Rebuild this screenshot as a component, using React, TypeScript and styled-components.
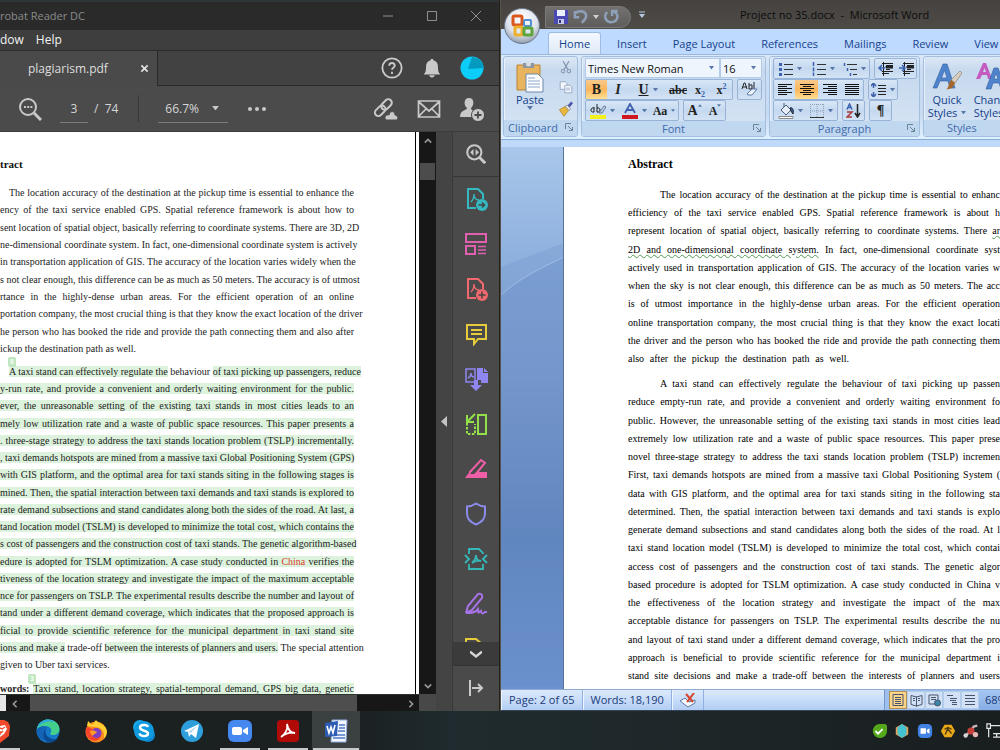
import React from "react";
import styled, { createGlobalStyle, css } from "styled-components";

const ui = `"Open Sans", "Noto Sans", sans-serif`;
const serif = `"Liberation Serif", serif`;

const GlobalStyle = createGlobalStyle`
  * { box-sizing: border-box; }
  body { margin: 0; font-family: ${ui}; overflow: hidden; background: #1b2021; }
  button, input, select { font: inherit; color: inherit; margin: 0; padding: 0; border: 0; background: none; border-radius: 0; outline: 0; }
  select { appearance: none; }
  svg { display: block; flex: none; }
  h1, p { margin: 0; }
`;

/* ---------- shell ---------- */

const Desktop = styled.div`
  height: 100vh;
  display: flex;
  flex-direction: column;
`;
const Windows = styled.main`
  flex: 1;
  min-height: 0;
  display: grid;
  grid-template-columns: minmax(0, 1fr) minmax(0, 1fr);
`;

/* ---------- reader window ---------- */

const Reader = styled.section`
  display: flex;
  flex-direction: column;
  min-height: 0;
  background: #4a4a4a;
  color: #d6d6d6;
  border-right: 1px solid #24211c;
`;
const ReaderTitle = styled.header`
  height: 30px;
  display: flex;
  align-items: center;
  background: #2a2a2a;
  border-top: 2px solid #2e3638;
  color: #8b8b8b;
  font-size: 11px;
  line-height: 16px;
`;
const WindowButtons = styled.div`
  margin-left: auto;
  display: flex;
  padding-right: 1px;
`;
const WindowButton = styled.button`
  width: 44px;
  height: 26px;
  display: grid;
  place-items: center;
  color: #8f8f8f;
`;
const MenuBar = styled.nav`
  height: 20px;
  display: flex;
  gap: 12px;
  background: #3e3e3e;
  color: #f2f2f2;
  font-size: 12px;
  line-height: 20px;
`;
const TabStrip = styled.div`
  height: 36px;
  display: flex;
  background: #424242;
  border-top: 1px solid #2c2c2c;
`;
const FileTab = styled.div`
  width: 158px;
  padding: 0 8px 0 28px;
  display: flex;
  align-items: center;
  justify-content: space-between;
  background: #4a4a4a;
  border-right: 1px solid #2a2a2a;
  font-size: 12px;
  color: #dedede;
`;
const CloseTab = styled.button`
  width: 10px;
  height: 10px;
  display: grid;
  place-items: center;
`;
const TabActions = styled.div`
  flex: 1;
  display: flex;
  align-items: center;
  justify-content: flex-end;
  gap: 16px;
  padding-right: 15px;
  border-bottom: 1px solid #2a2a2a;
`;
const IconButton = styled.button`
  width: 24px;
  height: 24px;
  display: grid;
  place-items: center;
  color: #c9c9c9;
`;
const Toolbar = styled.div`
  height: 46px;
  display: flex;
  align-items: center;
  background: #4b4b4b;
  padding: 0 15px 0 18px;
  font-size: 12px;
  border-bottom: 1px solid #3c3c3c;
`;
const PageInput = styled.input`
  width: 28px;
  height: 28px;
  margin: 0 6px 0 18px;
  text-align: center;
  border-bottom: 1px solid #7b7b7b;
`;
const Rule = styled.span`
  width: 1px;
  height: 27px;
  margin: 0 19px 0 20px;
  background: #383838;
`;
const ZoomBox = styled.label`
  width: 70px;
  height: 28px;
  margin-right: 17px;
  display: flex;
  align-items: center;
  padding: 0 9px 0 7px;
  border-bottom: 1px solid #7b7b7b;
  select { flex: 1; min-width: 0; }
`;
const ToolbarEnd = styled.div`
  margin-left: auto;
  display: flex;
  gap: 19px;
`;
const ReaderBody = styled.div`
  flex: 1;
  min-height: 0;
  display: flex;
`;
const Viewer = styled.div`
  flex: 1;
  min-width: 0;
  display: flex;
  flex-direction: column;
  background: #484848;
`;
const ViewRow = styled.div`
  flex: 1;
  min-height: 0;
  display: flex;
`;
const PdfPage = styled.article`
  flex: 1;
  min-width: 0;
  overflow: hidden;
  background: #fff;
  color: #222;
  font-family: ${serif};
  font-size: 10px;
  line-height: 17px;
  padding: 24px 61px 0 0;
  border-right: 1px solid #000;
`;
const Gutter = styled.div`
  width: 3px;
  background: #fff;
`;
const PdfHeading = styled.h1`
  font-size: 11px;
  line-height: 17px;
  font-weight: 700;
  color: #111;
`;
const Para = styled.div<{ $h: number; $top: number }>`
  position: relative;
  display: flex;
  flex-direction: column;
  justify-content: space-between;
  height: ${(p) => p.$h}px;
  margin-top: ${(p) => p.$top}px;
`;
const Line = styled.p<{ $indent?: number; $w?: number }>`
  width: ${(p) => (p.$w ? p.$w + "px" : "auto")};
  white-space: nowrap;
  text-align: justify;
  text-align-last: justify;
  padding-left: ${(p) => p.$indent ?? 0}px;
`;
const Hl = styled.mark`
  background: #dcf2dc;
  color: inherit;
`;
const Red = styled.span`
  color: #d8402c;
`;
const NoteFlag = styled.span<{ $x: number }>`
  position: absolute;
  left: ${(p) => p.$x}px;
  top: -6px;
  width: 8px;
  height: 10px;
  border-radius: 2px;
  background: #c0e6c0;
  color: #f2fff2;
  font: 700 7px/10px ${ui};
  text-align: center;
`;
const VScroll = styled.div`
  width: 17px;
  display: flex;
  flex-direction: column;
  align-items: center;
  background: #171717;
  color: #9a9a9a;
`;
const ScrollButton = styled.button`
  width: 17px;
  height: 17px;
  display: grid;
  place-items: center;
`;
const VThumb = styled.div`
  width: 15px;
  height: 17px;
  margin: 14px 0 auto;
  background: #4c4c4c;
`;
const HScroll = styled.div`
  height: 17px;
  display: flex;
  background: #171717;
  color: #9a9a9a;
  margin-right: 17px;
  border-top: 1px solid #2d352d;
`;
const HCorner = styled.div`
  width: 6px;
  background: #e6e6e6;
`;
const HThumb = styled.div`
  flex: 1;
  margin: 0 45px 0 7px;
  background: #4e4e4e;
`;
const Collapse = styled.button`
  width: 17px;
  display: grid;
  place-items: center;
  background: #444;
  border-right: 1px solid #393939;
`;
const ToolRail = styled.aside`
  width: 46px;
  display: flex;
  flex-direction: column;
  background: #4a4a4a;
`;
const ToolList = styled.div`
  flex: 1;
  min-height: 0;
  overflow: hidden;
`;
const Tool = styled.button<{ $c?: string; $line?: boolean }>`
  width: 46px;
  height: 45px;
  display: grid;
  place-items: center;
  color: ${(p) => p.$c ?? "#c9c9c9"};
  border-bottom: 1px solid ${(p) => (p.$line ? "#363636" : "transparent")};
`;
const MoreTools = styled.button`
  height: 24px;
  display: grid;
  place-items: center;
  background: #3b3b3b;
  border-bottom: 1px solid #333;
`;

/* ---------- word window ---------- */

const Word = styled.section`
  display: flex;
  flex-direction: column;
  min-height: 0;
  overflow: hidden;
  background: #bfd9fb;
  color: #15428b;
  border-left: 1px solid #56524c;
  font-size: 11px;
  position: relative;
`;
const WordTitle = styled.header`
  height: 29px;
  display: flex;
  align-items: center;
  padding-left: 44px;
  background: linear-gradient(#45423f, #4e4b47);
  color: #0c0c0c;
  white-space: pre;
`;
const QuickAccess = styled.div`
  width: 86px;
  height: 22px;
  margin-top: 4px;
  padding-left: 8px;
  display: flex;
  align-items: center;
  gap: 5px;
  border: 1px solid #7b7977;
  border-radius: 0 11px 11px 0;
  background: linear-gradient(#72716f, #5f5d5b);
`;
const PlainButton = styled.button`
  display: grid;
  place-items: center;
`;
const DocTitle = styled.span`
  margin-left: 89px;
`;
const Orb = styled.button`
  position: absolute;
  left: 2px;
  top: 7px;
  width: 38px;
  height: 38px;
`;
const RibbonTabs = styled.nav`
  height: 25px;
  display: flex;
  align-items: flex-end;
  padding-left: 47px;
  background: #bfdaff;
`;
const RibbonTab = styled.button<{ $on?: boolean }>`
  height: 22px;
  flex: none;
  padding: 0 ${(p) => (p.$on ? 10 : 12)}px;
  margin-right: ${(p) => (p.$on ? 3 : 0)}px;
  border-radius: 3px 3px 0 0;
  border: 1px solid transparent;
  border-bottom: 0;
  ${(p) =>
    p.$on &&
    css`
      background: linear-gradient(#f3f8ff, #dfeaf7);
      border-color: #9dbbe3;
    `}
`;
const Ribbon = styled.div`
  height: 86px;
  flex: none;
  display: flex;
  gap: 3px;
  padding: 1px 0 2px 2px;
  background: linear-gradient(#dbe8f7, #cbddf2 20%, #c8daef 70%, #dff0ff);
  border-top: 1px solid #98b8e0;
  border-bottom: 1px solid #88acd8;
`;
const Group = styled.div<{ $w: number }>`
  width: ${(p) => p.$w}px;
  flex: none;
  display: flex;
  flex-direction: column;
  border: 1px solid #a3bfe0;
  border-radius: 3px;
  overflow: hidden;
  background: linear-gradient(#dbe7f5, #c7d9ee 18%, #d6e5f5);
  box-shadow: inset 1px 0 #e9f2fc;
`;
const GroupBody = styled.div`
  flex: 1;
  display: flex;
  flex-direction: column;
  padding: 1px 3px 0;
`;
const GroupCaption = styled.div<{ $left?: boolean }>`
  height: 16px;
  flex: none;
  position: relative;
  background: #c0d7f0;
  color: #3e6aaa;
  line-height: 16px;
  text-align: ${(p) => (p.$left ? "left" : "center")};
  padding: 0 ${(p) => (p.$left ? 4 : 19)}px;
`;
const Launcher = styled.button`
  position: absolute;
  right: 4px;
  top: 3px;
`;
const Row = styled.div`
  height: 21px;
  display: flex;
  gap: 4px;
`;
const Cluster = styled.div`
  height: 21px;
  display: flex;
  border: 1px solid #97b3d8;
  border-radius: 2px;
  background: linear-gradient(#d9e7f7, #c4d8ef 50%, #d3e3f5);
`;
const Cmd = styled.button<{ $w: number; $on?: boolean }>`
  width: ${(p) => p.$w}px;
  display: flex;
  align-items: center;
  justify-content: center;
  gap: 4px;
  color: #222;
  font: 700 14px/18px ${serif};
  ${(p) =>
    p.$on &&
    css`
      background: linear-gradient(#f8c98b, #fbb65c 50%, #fddf93);
    `}
`;
const ComboPair = styled.div`
  display: flex;
`;
const Combo = styled.label<{ $w: number }>`
  width: ${(p) => p.$w}px;
  height: 20px;
  display: flex;
  align-items: center;
  padding: 0 5px 0 2px;
  background: #eef5fd;
  border: 1px solid #b3cbe8;
  color: #111;
  select { flex: 1; min-width: 0; }
`;
const Small = styled.span`
  font-size: 12px;
  sub, sup { font-size: 8px; line-height: 0; color: #3c62ae; }
`;
const TopMark = styled.span`
  align-self: flex-start;
  margin: 3px 0 0 -4px;
`;
const StylesCaption = styled(GroupCaption)`
  text-align: left;
  padding-left: 23px;
`;
const ClipBody = styled.div`
  flex: 1;
  display: grid;
  grid-template-columns: 52px 20px;
`;
const BigButton = styled.button<{ $w?: number }>`
  width: ${(p) => (p.$w ? p.$w + "px" : "auto")};
  display: flex;
  flex-direction: column;
  align-items: center;
  line-height: 13px;
  white-space: nowrap;
  padding-top: 4px;
`;
const BigLabel = styled.span`
  display: flex;
  align-items: center;
  gap: 4px;
`;
const ClipSide = styled.div`
  display: flex;
  flex-direction: column;
  justify-content: space-around;
  align-items: center;
`;
const StyleBody = styled.div`
  flex: 1;
  display: flex;
`;
const Canvas = styled.div`
  flex: 1;
  min-height: 0;
  margin-top: 7px;
  padding-left: 63px;
  display: flex;
  position: relative;
  background: linear-gradient(#a9c7ea, #8fb1de 20%, #7e9fd0 42%, #567db5 72%, #6b93d3);
`;
const Swoosh = styled.svg`
  position: absolute;
  left: 0;
  top: 0;
`;
const DocPage = styled.article`
  flex: 1;
  min-width: 0;
  position: relative;
  overflow: hidden;
  background: #fff;
  color: #000;
  font-family: ${serif};
  font-size: 10px;
  line-height: 18px;
  padding: 8px 0 0 64px;
  box-shadow: -1px 0 #58729c;
`;
const DocHeading = styled.h1`
  font-size: 12px;
  line-height: 18px;
  font-weight: 700;
  color: #000;
`;
const Squiggle = styled.span`
  text-decoration: underline wavy #4f9a55 1px;
  text-underline-offset: 1px;
`;
const StatusBar = styled.footer`
  height: 22px;
  flex: none;
  display: flex;
  align-items: stretch;
  line-height: 20px;
  background: linear-gradient(#dce9fb, #cbdffa 40%, #b2cdf3);
  border-top: 1px solid #8fabd0;
  border-bottom: 1px solid #37445a;
  color: #1c3a78;
`;
const StatusItem = styled.span`
  padding: 0 7px 0 8px;
  display: flex;
  align-items: center;
  border-right: 1px solid #8fb0e0;
  box-shadow: inset 1px 0 #eef5ff;
`;
const ViewSwitch = styled.div`
  margin-left: auto;
  padding: 1px 0 1px 4px;
  display: flex;
  background: #9dbfee;
  border-left: 1px solid #7397cc;
`;
const ViewButton = styled.button<{ $on?: boolean }>`
  width: 18px;
  display: grid;
  place-items: center;
  color: #46556b;
  background: ${(p) => (p.$on ? "#fbd48c" : "#d2e1f5")};
  border: 1px solid ${(p) => (p.$on ? "#b48f54" : "#b2cbe9")};
`;
const ZoomLevel = styled.button`
  width: 21px;
  padding-left: 6px;
  overflow: hidden;
  text-align: left;
  white-space: nowrap;
  background: linear-gradient(#a6c7f4, #86aee4);
`;

/* ---------- taskbar ---------- */

const Taskbar = styled.footer`
  height: 39px;
  flex: none;
  display: flex;
  background: linear-gradient(90deg, #1b2021, #1b2021 35%, #1f2b2e 45%, #1f292b 60%, #191e1f);
`;
const TaskItems = styled.div`
  display: flex;
  margin-left: -24px;
`;
const Task = styled.button<{ $open?: boolean; $on?: boolean }>`
  width: 48px;
  display: grid;
  place-items: center;
  position: relative;
  background: ${(p) => (p.$on ? "#3b4041" : "transparent")};
  &::after {
    content: "";
    display: ${(p) => (p.$open ? "block" : "none")};
    position: absolute;
    left: ${(p) => (p.$on ? 1 : 4)}px;
    right: ${(p) => (p.$on ? 1 : 4)}px;
    bottom: 0;
    height: 2px;
    background: #c6cacb;
  }
`;
const Tray = styled.div`
  margin-left: auto;
  margin-right: -3px;
  display: flex;
  align-items: center;
  gap: 5px;
  padding-top: 1px;
`;
const TrayButton = styled.button`
  width: 18px;
  height: 18px;
  display: grid;
  place-items: center;
`;

/* ---------- icon helpers ---------- */

type SvgProps = { w?: number; h?: number; box?: string; sw?: number; children: React.ReactNode };
const Ico = ({ w = 24, h, box = "0 0 24 24", sw = 2, children }: SvgProps) => (
  <svg width={w} height={h ?? w} viewBox={box} fill="none" stroke="currentColor" strokeWidth={sw} aria-hidden="true">
    {children}
  </svg>
);
const Caret = ({ c = "#5877a8", w = 6, up }: { c?: string; w?: number; up?: boolean }) => (
  <svg width={w} height={w / 2 + 1} viewBox="0 0 6 4" aria-hidden="true">
    <path d={up ? "M0 4h6L3 0z" : "M0 0h6L3 4z"} fill={c} />
  </svg>
);
const Chevron = ({ d, w = 10, sw = 2 }: { d: string; w?: number; sw?: number }) => (
  <Ico w={w} box="0 0 10 10" sw={sw}>
    <path d={d} />
  </Ico>
);
const LaunchIcon = () => (
  <Ico w={8} box="0 0 8 8" sw={1}>
    <path d="M.5 6V.5H6M3 3l4 4M7.500 4v3.500H4" stroke="#6b8396" />
  </Ico>
);

const tools: { name: string; c: string; art: React.ReactNode }[] = [
  {
    name: "Export PDF",
    c: "#35b8c0",
    art: (
      <>
        <path d="M12 21H4V2h10l5 5v5" />
        <path d="M7 15c2-2 3-5 3-8 0 4 2 6 5 6" strokeWidth="1.300" />
        <circle cx="18" cy="18" r="6" fill="currentColor" stroke="none" />
        <path d="M14.500 18h6M18 15.500l2.500 2.500-2.500 2.500" stroke="#444" strokeWidth="1.500" />
      </>
    ),
  },
  {
    name: "Organize Pages",
    c: "#e060b0",
    art: (
      <>
        <path d="M2 2h20v8H2zM2 14h9v8H2z" />
        <path d="M14 14.500h8M14 18h8M14 21.500h8" strokeWidth="1.300" />
      </>
    ),
  },
  {
    name: "Create PDF",
    c: "#f0696f",
    art: (
      <>
        <path d="M12 21H4V2h10l5 5v5" />
        <path d="M7 15c2-2 3-5 3-8 0 4 2 6 5 6" strokeWidth="1.300" />
        <circle cx="18" cy="18" r="6" fill="currentColor" stroke="none" />
        <path d="M14.500 18h7M18 14.500v7" stroke="#444" strokeWidth="1.500" />
      </>
    ),
  },
  { name: "Comment", c: "#e6cc3c", art: <path d="M3 3h19v14h-8l-4 5v-5H3zM7 8h11M7 12h11" /> },
  {
    name: "Combine Files",
    c: "#8f86f2",
    art: (
      <>
        <path d="M2 2h9v13H2zM4 11c2-1 3-3 3-5 0 3 1 4 3 4" strokeWidth="1.500" />
        <path d="M13 1h6v5h5v10h-7v-3h-4zM10 13h4v5h4l-6 6-6-6h4z" fill="currentColor" stroke="none" />
        <path d="M20 1l4 4h-4z" fill="currentColor" stroke="none" />
      </>
    ),
  },
  {
    name: "Compress Pages",
    c: "#93e04b",
    art: (
      <>
        <path d="M14 3h8v19h-8z" />
        <path d="M3 11v11h8V12" strokeDasharray="2.500 1.500" />
        <path d="M11 2 4 9M3 3v7h7" />
      </>
    ),
  },
  {
    name: "Redact",
    c: "#ee5fa8",
    art: (
      <>
        <path d="M6 15 17 3l4 3-10 12-6 1z" />
        <path d="M1 21l3-4h6l3-2h10v6z" fill="currentColor" stroke="none" />
      </>
    ),
  },
  { name: "Protect", c: "#8b8bea", art: <path d="M12 1.500c3 2 6 3 9 3v7c0 5-4 9-9 11-5-2-9-6-9-11v-7c3 0 6-1 9-3z" /> },
  {
    name: "Optimize PDF",
    c: "#35b8b8",
    art: <path d="M5 7V2h10l4 4v1M5 17v5h14v-5M1 8l4 4-4 4M23 8l-4 4 4 4M8 16c2-2 4-5 4-8 0 4 2 6 5 6-3-1-6 0-9 2z" strokeWidth="1.800" />,
  },
  {
    name: "Fill and Sign",
    c: "#a772e6",
    art: <path d="M2 21 4 14 14 2c3-1 5 1 4 4L8 18l-6 3c5 0 10 0 12-4 1 4-1 5 3 2 0 3 2 3 4 1h2" />,
  },
  { name: "More", c: "#e6cc3c", art: <path d="M2 20V2h10l6 5v13z" /> },
];

/* ---------- content ---------- */

const pdfIntro = [
  "The location accuracy of the destination at the pickup time is essential to enhance the",
  "ency of the taxi service enabled GPS. Spatial reference framework is about how to",
  "sent location of spatial object, basically referring to coordinate systems. There are 3D, 2D",
  "ne-dimensional coordinate system. In fact, one-dimensional coordinate system is actively",
  "in transportation application of GIS. The accuracy of the location varies widely when the",
  "s not clear enough, this difference can be as much as 50 meters. The accuracy is of utmost",
  "rtance in the highly-dense urban areas. For the efficient operation of an online",
  "portation company, the most crucial thing is that they know the exact location of the driver",
  "he person who has booked the ride and provide the path connecting them and also after",
  "ickup the destination path as well.",
];
const pdfBody: React.ReactNode[] = [
  <><Hl>A taxi stand can effectively regulate the</Hl> behaviour <Hl>of taxi picking up passengers, reduce</Hl></>,
  <Hl>y-run rate, and provide a convenient and orderly waiting environment for the public.</Hl>,
  <Hl>ever, the unreasonable setting of the existing taxi stands in most cities leads to an</Hl>,
  <Hl>mely low utilization rate and a waste of public space resources. This paper presents a</Hl>,
  <Hl>. three-stage strategy to address the taxi stands location problem (TSLP) incrementally.</Hl>,
  <Hl>, taxi demands hotspots are mined from a massive taxi Global Positioning System (GPS)</Hl>,
  <Hl>with GIS platform, and the optimal area for taxi stands siting in the following stages is</Hl>,
  <Hl>mined. Then, the spatial interaction between taxi demands and taxi stands is explored to</Hl>,
  <Hl>rate demand subsections and stand candidates along both the sides of the road. At last, a</Hl>,
  <Hl>tand location model (TSLM) is developed to minimize the total cost, which contains the</Hl>,
  <Hl>s cost of passengers and the construction cost of taxi stands. The genetic algorithm-based</Hl>,
  <Hl>edure is adopted for TSLM optimization. A case study conducted in <Red>China</Red> verifies the</Hl>,
  <Hl>tiveness of the location strategy and investigate the impact of the maximum acceptable</Hl>,
  <Hl>nce for passengers on TSLP. The experimental results describe the number and layout of</Hl>,
  <Hl>tand under a different demand coverage, which indicates that the proposed approach is</Hl>,
  <Hl>ficial to provide scientific reference for the municipal department in taxi stand site</Hl>,
  <><Hl>ions and make a</Hl> trade-off <Hl>between the interests of planners and users.</Hl> The special attention</>,
  "given to Uber taxi services.",
];
const docIntro: React.ReactNode[] = [
  "The location accuracy of the destination at the pickup time is essential to enhanc",
  "efficiency of the taxi service enabled GPS. Spatial reference framework is about h",
  <>represent location of spatial object, basically referring to coordinate systems. There <Squiggle>ar</Squiggle></>,
  <><Squiggle>2D and one-dimensional coordinate system.</Squiggle> In fact, one-dimensional coordinate syst</>,
  "actively used in transportation application of GIS. The accuracy of the location varies w",
  "when the sky is not clear enough, this difference can be as much as 50 meters. The acc",
  "is of utmost importance in the highly-dense urban areas. For the efficient operation",
  "online transportation company, the most crucial thing is that they know the exact locati",
  "the driver and the person who has booked the ride and provide the path connecting them",
  "also after the pickup the destination path as well.",
];
const docBody = [
  "A taxi stand can effectively regulate the behaviour of taxi picking up passen",
  "reduce empty-run rate, and provide a convenient and orderly waiting environment fo",
  "public. However, the unreasonable setting of the existing taxi stands in most cities lead",
  "extremely low utilization rate and a waste of public space resources. This paper prese",
  "novel three-stage strategy to address the taxi stands location problem (TSLP) incremen",
  "First, taxi demands hotspots are mined from a massive taxi Global Positioning System (",
  "data with GIS platform, and the optimal area for taxi stands siting in the following sta",
  "determined. Then, the spatial interaction between taxi demands and taxi stands is explo",
  "generate demand subsections and stand candidates along both the sides of the road. At l",
  "taxi stand location model (TSLM) is developed to minimize the total cost, which contai",
  "access cost of passengers and the construction cost of taxi stands. The genetic algor",
  "based procedure is adopted for TSLM optimization. A case study conducted in China v",
  "the effectiveness of the location strategy and investigate the impact of the max",
  "acceptable distance for passengers on TSLP. The experimental results describe the nu",
  "and layout of taxi stand under a different demand coverage, which indicates that the pro",
  "approach is beneficial to provide scientific reference for the municipal department i",
  "stand site decisions and make a trade-off between the interests of planners and users",
];

/* ---------- reader ---------- */

function ReaderWindow() {
  return (
    <Reader>
      <ReaderTitle>
        <span>robat Reader DC</span>
        <WindowButtons>
          <WindowButton aria-label="Minimize"><Chevron d="M0 5h10" sw={1} /></WindowButton>
          <WindowButton aria-label="Maximize"><Chevron d="M.5.5h9v9h-9z" sw={1} /></WindowButton>
          <WindowButton aria-label="Close"><Chevron d="M0 0l10 10M10 0L0 10" sw={1} /></WindowButton>
        </WindowButtons>
      </ReaderTitle>
      <MenuBar><span>dow</span><span>Help</span></MenuBar>
      <TabStrip>
        <FileTab>
          plagiarism.pdf
          <CloseTab aria-label="Close tab"><Chevron d="M1.500 1.500l7 7M8.500 1.500l-7 7" w={9} /></CloseTab>
        </FileTab>
        <TabActions>
          <IconButton aria-label="Help">
            <Ico w={22}>
              <circle cx="12" cy="12" r="10.500" />
              <path d="M9 9.500C9 5.500 15 5.500 15 9.500c0 2-3 2-3 4.500M12 16v2.500" />
            </Ico>
          </IconButton>
          <IconButton aria-label="Notifications">
            <Ico w={22} sw={0}>
              <path d="M12 2c1 0 1.500.8 1.500 1.600C17 4.500 18.500 7 18.500 11c0 4 .5 6 2.500 8H3c2-2 2.500-4 2.500-8 0-4 1.500-6.500 5-7.400C10.500 2.800 11 2 12 2zM9 20h6c0 3-6 3-6 0z" fill="currentColor" />
            </Ico>
          </IconButton>
          <IconButton aria-label="Account">
            <Ico sw={0}>
              <circle cx="12" cy="12" r="11.500" fill="#0ccdf8" />
              <path d="M8 13 12 1c6 0 11.500 5 11.500 11L8 13z" fill="#0499bf" />
            </Ico>
          </IconButton>
        </TabActions>
      </TabStrip>
      <Toolbar>
        <IconButton aria-label="Find text">
          <Ico>
            <circle cx="10" cy="10" r="8" />
            <path d="M16 16l7 7" strokeWidth="3" />
            <path d="M6 10h8.500" strokeDasharray="2 1.200" />
          </Ico>
        </IconButton>
        <PageInput aria-label="Page number" defaultValue="3" />
        <span>/&nbsp; 74</span>
        <Rule />
        <ZoomBox>
          <select aria-label="Zoom"><option>66.7%</option></select>
          <Caret c="#c9c9c9" w={7} />
        </ZoomBox>
        <IconButton aria-label="More options">
          <Ico w={20} box="0 0 20 20" sw={0}>
            <g fill="currentColor"><circle cx="3" cy="10" r="2" /><circle cx="10" cy="10" r="2" /><circle cx="17" cy="10" r="2" /></g>
          </Ico>
        </IconButton>
        <ToolbarEnd>
          <IconButton aria-label="Share link">
            <Ico>
              <g transform="rotate(-45 9 11)">
                <rect x="-1" y="7.500" width="12" height="7" rx="3.500" />
                <rect x="8" y="7.500" width="12" height="7" rx="3.500" />
              </g>
              <path d="M12 23c-3-3 1-6 3-5 1-5 6-4 6 0 3 0 4 5 1 5z" fill="currentColor" stroke="#4b4b4b" strokeWidth="1" />
            </Ico>
          </IconButton>
          <IconButton aria-label="Send by email">
            <Ico><path d="M1.500 4h21v16h-21zM2 5l10 9L22 5M2 19l7-7M22 19l-7-7" strokeWidth="1.700" /></Ico>
          </IconButton>
          <IconButton aria-label="Share with people">
            <Ico sw={0}>
              <path d="M9 1c6 0 5 8 2 10 0 3 3 2 4 4l-1 5H0c0-8 7-6 7-9C4 9 3 1 9 1z" fill="currentColor" />
              <circle cx="18" cy="18" r="6.500" fill="currentColor" stroke="#4b4b4b" strokeWidth="1" />
              <path d="M14.500 18h7M18 14.500v7" stroke="#4b4b4b" strokeWidth="1.800" />
            </Ico>
          </IconButton>
        </ToolbarEnd>
      </Toolbar>
      <ReaderBody>
        <Viewer>
          <ViewRow>
            <PdfPage>
              <PdfHeading>tract</PdfHeading>
              <Para $h={173} $top={11}>
                {pdfIntro.map((t, i) => (
                  <Line key={i} $indent={i ? 0 : 9} $w={i === 9 ? 134 : undefined}>{t}</Line>
                ))}
              </Para>
              <Para $h={310} $top={6}>
                <NoteFlag $x={8}>8</NoteFlag>
                {pdfBody.map((t, i) => (
                  <Line key={i} $indent={i ? 0 : 9} $w={i === 17 ? 106 : undefined}>{t}</Line>
                ))}
              </Para>
              <Para $h={17} $top={7}>
                <NoteFlag $x={28}>3</NoteFlag>
                <Line><b>words:</b> <Hl>Taxi stand, location strategy, spatial-temporal demand, GPS big data, genetic</Hl></Line>
              </Para>
            </PdfPage>
            <Gutter />
            <VScroll>
              <ScrollButton aria-label="Scroll up"><Chevron d="M1 7l4-4 4 4" w={8} /></ScrollButton>
              <VThumb />
              <ScrollButton aria-label="Scroll down"><Chevron d="M1 3l4 4 4-4" w={8} /></ScrollButton>
            </VScroll>
          </ViewRow>
          <HScroll>
            <HCorner />
            <ScrollButton aria-label="Scroll left"><Chevron d="M7 1L3 5l4 4" w={8} /></ScrollButton>
            <HThumb />
            <ScrollButton aria-label="Scroll right"><Chevron d="M3 1l4 4-4 4" w={8} /></ScrollButton>
          </HScroll>
        </Viewer>
        <Collapse aria-label="Collapse tools">
          <svg width="6" height="11" viewBox="0 0 6 11"><path d="M6 0v11L0 5.500z" fill="#c4c4c4" /></svg>
        </Collapse>
        <ToolRail>
          <Tool $line aria-label="Search tools">
            <Ico w={20}>
              <circle cx="10" cy="10" r="8.500" strokeWidth="2.500" />
              <path d="M16 16l7 7" strokeWidth="3.500" />
              <path d="M9 6v8L5 10zM11.500 6v8l4-4z" fill="currentColor" stroke="none" />
            </Ico>
          </Tool>
          <ToolList>
            {tools.map((t) => (
              <Tool key={t.name} $c={t.c} aria-label={t.name}><Ico>{t.art}</Ico></Tool>
            ))}
          </ToolList>
          <MoreTools aria-label="Show more tools"><Chevron d="M0 3l5 4 5-4" w={12} /></MoreTools>
          <Tool aria-label="Open tools pane">
            <Ico w={16} box="0 0 16 16"><path d="M2 0v16M4 8h10M10 4l4 4-4 4" /></Ico>
          </Tool>
        </ToolRail>
      </ReaderBody>
    </Reader>
  );
}

/* ---------- word ---------- */

const ListIcon = ({ kind }: { kind: "dot" | "num" | "multi" }) => (
  <Ico w={14} box="0 0 14 14" sw={1}>
    {kind === "multi" ? (
      <>
        <path d="M4 2.500h10M7 7.500h7M10 12.500h4" stroke="#333" />
        <path d="M1.500 1v3M4.500 6v3M7.500 11v3" stroke="#3c62ae" strokeWidth="1.500" />
      </>
    ) : (
      <>
        <path d="M5 2.500h9M5 7.500h9M5 12.500h9" stroke="#333" />
        <path d={kind === "dot" ? "M0 2.500h3M0 7.500h3M0 12.500h3" : "M1.500 0v4M1.500 5.500v4M1.500 10.500v3.500"} stroke="#3c62ae" strokeWidth={kind === "dot" ? 3 : 1.5} />
      </>
    )}
  </Ico>
);
const AlignIcon = ({ rows }: { rows: string }) => (
  <Ico w={14} h={12} box="0 0 14 12" sw={1}><path d={rows} stroke="#111" /></Ico>
);
const IndentIcon = ({ out }: { out?: boolean }) => (
  <Ico w={15} h={14} box="0 0 15 14" sw={1}>
    <path d="M4 1.500h11M8 3.500h7M8 5.500h7M8 7.500h4M4 9.500h11M4 11.500h7M5.500 0v14" stroke="#222" />
    <path d="M8 4h7v2H8z" fill="#222" />
    <path d={out ? "M7 6H1M4 3L1 6l3 3" : "M0 6h6M3 3l3 3-3 3"} stroke="#3c62ae" strokeWidth="1.500" />
  </Ico>
);
const PageIcon = () => (
  <Ico w={12} box="0 0 12 12" sw={1}><path d="M1 .5h10v11H1zM3 3.500h6M3 5.500h6M3 7.500h6M3 9.500h6" /></Ico>
);

function WordWindow() {
  return (
    <Word>
      <WordTitle>
        <QuickAccess>
          <PlainButton aria-label="Save">
            <svg width="14" height="14" viewBox="0 0 14 14"><path d="M0 0h14v14H0z" fill="#4b49b4" /><path d="M3 0h8v6H3z" fill="#e8eefa" /><path d="M4 9h6v5H4z" fill="#c7cbe8" /><path d="M5 10h2v3H5z" fill="#33318e" /></svg>
          </PlainButton>
          <PlainButton aria-label="Undo">
            <Ico w={15} sw={4}><path d="M3 7c8-6 18-3 18 4 0 5-4 8-7 11M10 13H3V3" stroke="#8da0b8" /></Ico>
          </PlainButton>
          <Caret c="#d0d0d0" />
          <PlainButton aria-label="Redo">
            <Ico w={15} sw={4}><path d="M5 5c-8 9 1 17 8 16 9-1 12-12 3-17M13 11V3h9" stroke="#8da0b8" /></Ico>
          </PlainButton>
        </QuickAccess>
        <PlainButton aria-label="Customize toolbar">
          <svg width="20" height="8" viewBox="0 0 20 8"><path d="M8 1h6" stroke="#b9cbe6" /><path d="M8 3h6l-3 4z" fill="#b9cbe6" /></svg>
        </PlainButton>
        <DocTitle>Project no 35.docx  -  Microsoft Word</DocTitle>
      </WordTitle>
      <Orb aria-label="Office menu">
        <svg width="38" height="38" viewBox="0 0 38 38">
          <defs>
            <radialGradient id="orb" cx=".5" cy=".3" r=".75">
              <stop offset="0" stopColor="#fff" /><stop offset=".6" stopColor="#dde2ea" /><stop offset="1" stopColor="#7f8da3" />
            </radialGradient>
          </defs>
          <circle cx="19" cy="19" r="17.500" fill="url(#orb)" stroke="#6b7688" />
          <g fill="none" strokeWidth="3">
            <rect x="10" y="9" width="9" height="9" rx="1.500" stroke="#d9571f" />
            <rect x="21" y="13" width="7" height="6" rx="1" stroke="#4d8fd1" strokeWidth="2" />
            <rect x="12" y="20" width="7" height="8" rx="1" stroke="#efb02e" />
            <rect x="21" y="21" width="8" height="7" rx="1" stroke="#5fa43d" />
          </g>
        </svg>
      </Orb>
      <RibbonTabs>
        <RibbonTab $on>Home</RibbonTab>
        {["Insert", "Page Layout", "References", "Mailings", "Review", "View"].map((t) => (
          <RibbonTab key={t}>{t}</RibbonTab>
        ))}
      </RibbonTabs>
      <Ribbon>
        <Group $w={75}>
          <ClipBody>
            <BigButton>
              <svg width="28" height="32" viewBox="0 0 28 32">
                <path d="M1 4h23v25H1z" fill="#e9b45e" stroke="#b98638" />
                <path d="M7 2h11v5H7z" fill="#8d959e" /><circle cx="12.500" cy="3" r="2.500" fill="#d8dde3" />
                <path d="M10 13h12l5 5v13H10z" fill="#fbfcfe" stroke="#6f87ab" />
                <path d="M12 17h7M12 20h12M12 23h12M12 26h12" stroke="#8fa8cc" />
              </svg>
              Paste
              <Caret />
            </BigButton>
            <ClipSide>
              <PlainButton aria-label="Cut"><Ico w={14}><path d="M7 2l8 14M17 2L9 16" stroke="#7d8fa8" /><circle cx="7" cy="19" r="3" stroke="#8a9cb5" /><circle cx="17" cy="19" r="3" stroke="#8a9cb5" /></Ico></PlainButton>
              <PlainButton aria-label="Copy"><Ico w={14} sw={1.5}><path d="M2 3h9l3 3v10H2z" fill="#f3f7fc" stroke="#8fa5c4" /><path d="M10 9h9l3 3v10H10z" fill="#f3f7fc" stroke="#8fa5c4" /><path d="M12 14h7M12 17h7" stroke="#9db2d0" /></Ico></PlainButton>
              <PlainButton aria-label="Format painter"><Ico w={16} sw={1}><path d="M2 13l9-5 5 6-7 9z" fill="#e6b83e" stroke="#a87f22" /><path d="M11 8l3-2 5 6-3 2z" fill="#e9edf3" stroke="#777" /><path d="M16 8l5-6" stroke="#4b55a8" strokeWidth="4" /></Ico></PlainButton>
            </ClipSide>
          </ClipBody>
          <GroupCaption $left>Clipboard<Launcher aria-label="Clipboard options"><LaunchIcon /></Launcher></GroupCaption>
        </Group>
        <Group $w={185}>
          <GroupBody>
            <Row>
              <ComboPair>
                <Combo $w={135}><select aria-label="Font"><option>Times New Roman</option></select><Caret w={5} /></Combo>
                <Combo $w={42}><select aria-label="Font size"><option>16</option></select><Caret w={5} /></Combo>
              </ComboPair>
            </Row>
            <Row>
              <Cluster>
                <Cmd $w={21} $on>B</Cmd>
                <Cmd $w={22}><i>I</i></Cmd>
                <Cmd $w={38}><u>U</u><Caret w={5} /></Cmd>
                <Cmd $w={22}><Small><s>abc</s></Small></Cmd>
                <Cmd $w={22}><Small>x<sub>2</sub></Small></Cmd>
                <Cmd $w={21}><Small>x<sup>2</sup></Small></Cmd>
              </Cluster>
              <Cluster>
                <Cmd $w={23} aria-label="Clear formatting">
                  <Ico w={17} box="0 0 17 17" sw={1}><path d="M1 8l2-6h1l2 6M2 6h4M8 2v6h3V4H8M13 1v7" stroke="#222" /><path d="M6 13l5-5h5l-5 6H7z" fill="#eef3fb" stroke="#5f7ba8" /></Ico>
                </Cmd>
              </Cluster>
            </Row>
            <Row>
              <Cluster>
                <Cmd $w={32} aria-label="Highlight colour">
                  <Ico w={16} box="0 0 16 16" sw={1}><path d="M0 12h16v4H0z" fill="#f4f01c" stroke="none" /><path d="M4 5c-4-1-4 5 0 4V4M7 1v8c4 1 4-5 0-4" stroke="#222" /><path d="M9 10l5-7 2 1-4 6z" fill="#c5d4e8" stroke="#5e7797" /></Ico>
                  <Caret w={5} />
                </Cmd>
                <Cmd $w={32} aria-label="Font colour">
                  <Ico w={16} box="0 0 16 16"><path d="M0 12h16v4H0z" fill="#d01820" stroke="none" /><path d="M3 10L8 1l5 9M5 7h6" stroke="#3e62ac" strokeWidth="1.800" /></Ico>
                  <Caret w={5} />
                </Cmd>
                <Cmd $w={28}><Small>Aa</Small><Caret w={4} /></Cmd>
              </Cluster>
              <Cluster>
                <Cmd $w={21} aria-label="Grow font">A<TopMark><Caret w={4} up /></TopMark></Cmd>
                <Cmd $w={20} aria-label="Shrink font"><Small>A</Small><TopMark><Caret w={4} /></TopMark></Cmd>
              </Cluster>
            </Row>
          </GroupBody>
          <GroupCaption>Font<Launcher aria-label="Font options"><LaunchIcon /></Launcher></GroupCaption>
        </Group>
        <Group $w={151}>
          <GroupBody>
            <Row>
              <Cluster>
                <Cmd $w={33} aria-label="Bullets"><ListIcon kind="dot" /><Caret w={5} /></Cmd>
                <Cmd $w={32} aria-label="Numbering"><ListIcon kind="num" /><Caret w={5} /></Cmd>
                <Cmd $w={30} aria-label="Multilevel list"><ListIcon kind="multi" /><Caret w={5} /></Cmd>
              </Cluster>
              <Cluster>
                <Cmd $w={21} aria-label="Decrease indent"><IndentIcon out /></Cmd>
                <Cmd $w={20} aria-label="Increase indent"><IndentIcon /></Cmd>
              </Cluster>
            </Row>
            <Row>
              <Cluster>
                <Cmd $w={21} aria-label="Align left"><AlignIcon rows="M0 .5h14M0 2.500h9M0 4.500h14M0 6.500h9M0 8.500h14M0 10.500h9" /></Cmd>
                <Cmd $w={23} $on aria-label="Centre"><AlignIcon rows="M0 .5h14M3 2.500h8M0 4.500h14M3 6.500h8M0 8.500h14M3 10.500h8" /></Cmd>
                <Cmd $w={23} aria-label="Align right"><AlignIcon rows="M0 .5h14M5 2.500h9M0 4.500h14M5 6.500h9M0 8.500h14M5 10.500h9" /></Cmd>
                <Cmd $w={22} aria-label="Justify"><AlignIcon rows="M0 .5h14M0 2.500h14M0 4.500h14M0 6.500h14M0 8.500h14M0 10.500h14" /></Cmd>
              </Cluster>
              <Cluster>
                <Cmd $w={28} aria-label="Line spacing">
                  <Ico w={15} h={14} box="0 0 15 14" sw={1}><path d="M7 2.500h8M7 5.500h8M7 8.500h8M7 11.500h8" stroke="#222" /><path d="M2.500 0v5M0 3l2.500-3L5 3M2.500 9v5M0 11l2.500 3L5 11" stroke="#3c62ae" strokeWidth="1.500" /></Ico>
                  <Caret w={5} />
                </Cmd>
              </Cluster>
            </Row>
            <Row>
              <Cluster>
                <Cmd $w={32} aria-label="Shading">
                  <Ico w={16} box="0 0 16 16" sw={1}><path d="M1 13.500h14v2H1z" fill="#fff" stroke="#888" /><path d="M3 7l5-5 5 5-5 5zM6 0v4" fill="#e6edf6" stroke="#4d5f78" /><path d="M12 5c2-1 4 1 3 6l-2-3z" fill="#3c62ae" /></Ico>
                  <Caret w={5} />
                </Cmd>
                <Cmd $w={31} aria-label="Borders">
                  <Ico w={14} box="0 0 14 14" sw={1}><path d="M.5 0v14M7 0v14M13.500 0v14M0 .5h14M0 7h14" stroke="#8da0b8" strokeDasharray="1 1" /><path d="M0 13.500h14" stroke="#333" /></Ico>
                  <Caret w={5} />
                </Cmd>
              </Cluster>
              <Cluster>
                <Cmd $w={21} aria-label="Sort">
                  <Ico w={15} box="0 0 15 15" sw={1.5}><path d="M1 6.500L3.500 1 6 6.500M2 4.500h3" stroke="#3c62ae" /><path d="M1 9h5l-5 5h5" stroke="#a83a3a" /><path d="M11.500 1v12M9 10l2.500 4 2.500-4" stroke="#222" /></Ico>
                </Cmd>
              </Cluster>
              <Cluster><Cmd $w={21}>¶</Cmd></Cluster>
            </Row>
          </GroupBody>
          <GroupCaption>Paragraph<Launcher aria-label="Paragraph options"><LaunchIcon /></Launcher></GroupCaption>
        </Group>
        <Group $w={120}>
          <StyleBody>
            <BigButton $w={46}>
              <svg width="30" height="32" viewBox="0 0 30 32">
                <path d="M1 27L11 3h4l8 24h-5l-2-7H8l-3 7zM9.500 17h5.500L12.500 9z" fill="#4f83cc" stroke="#2f5ea3" strokeWidth=".6" />
                <path d="M19 19l9-9 2 2-7 10z" fill="#d9cfc0" stroke="#80705a" strokeWidth=".6" />
                <path d="M14 28c3 0 2-6 5-9l4 3c-1 4-5 7-9 6z" fill="#a5682a" />
              </svg>
              Quick
              <BigLabel>Styles <Caret w={5} /></BigLabel>
            </BigButton>
            <BigButton $w={46}>
              <svg width="34" height="32" viewBox="0 0 34 32">
                <path d="M0 18L7 2h3l6 16h-4l-1-4H6l-2 4zM7 11h3L8.500 7z" fill="#c45cc0" />
                <path d="M10 28L18 7h4l8 21h-5l-2-6h-6l-2 6zM18 18h4l-2-6z" fill="#4f83cc" stroke="#2f5ea3" strokeWidth=".6" />
              </svg>
              Change
              <BigLabel>Styles <Caret w={5} /></BigLabel>
            </BigButton>
          </StyleBody>
          <StylesCaption>Styles</StylesCaption>
        </Group>
      </Ribbon>
      <Canvas>
        <Swoosh width="63" height="540" viewBox="0 0 63 540">
          <path d="M0 120C20 112 42 104 63 96V540H0z" fill="#7699cf" opacity=".35" />
          <path d="M0 148C20 130 42 120 63 110V540H0z" fill="#6488c4" opacity=".3" />
          <path d="M0 148C20 130 42 120 63 110" stroke="#b4cdee" fill="none" opacity=".6" />
        </Swoosh>
        <DocPage>
          <DocHeading>Abstract</DocHeading>
          <Para $h={182} $top={13}>
            {docIntro.map((t, i) => (
              <Line key={i} $indent={i ? 0 : 32} $w={i === 9 ? 221 : undefined}>{t}</Line>
            ))}
          </Para>
          <Para $h={310} $top={7}>
            {docBody.map((t, i) => (
              <Line key={i} $indent={i ? 0 : 32}>{t}</Line>
            ))}
          </Para>
        </DocPage>
      </Canvas>
      <StatusBar>
        <StatusItem>Page: 2 of 65</StatusItem>
        <StatusItem>Words: 18,190</StatusItem>
        <StatusItem>
          <svg width="16" height="15" viewBox="0 0 16 15"><path d="M0 8l5-3 4 4 6-2v3l-7 4z" fill="#f4f7fc" stroke="#5f78a5" /><path d="M6 1l7 8M14 0L7 9" stroke="#d9432c" strokeWidth="2" /></svg>
        </StatusItem>
        <ViewSwitch>
          <ViewButton $on aria-label="Print layout"><PageIcon /></ViewButton>
          <ViewButton aria-label="Full screen reading"><Ico w={13} box="0 0 13 12" sw={1}><path d="M6.500 2v10M1 1l5.500 1.500L12 1v9l-5.500 1.500L1 10zM3 4h2M3 6h2M8 4h2M8 6h2" /></Ico></ViewButton>
          <ViewButton aria-label="Web layout"><Ico w={13} box="0 0 13 12" sw={1}><path d="M1 .5h9v9H1zM3 3h5M3 5h5" /><circle cx="9.500" cy="8.500" r="3" fill="#3c86a8" /></Ico></ViewButton>
          <ViewButton aria-label="Outline"><Ico w={12} box="0 0 12 12" sw={1}><path d="M1 1.500h6M4 4.500h7M4 6.500h6M6 8.500h5M6 10.500h5" /></Ico></ViewButton>
          <ViewButton aria-label="Draft"><Ico w={12} box="0 0 12 12" sw={1}><path d="M1 1.500h10M1 4.500h10M1 7.500h10M1 10.500h10" /></Ico></ViewButton>
        </ViewSwitch>
        <ZoomLevel>68%</ZoomLevel>
      </StatusBar>
    </Word>
  );
}

/* ---------- taskbar ---------- */

const taskApps: { name: string; open?: boolean; on?: boolean; art: React.ReactNode }[] = [
  {
    name: "Brave", open: true,
    art: <><path d="M4 3l4-2h8l4 2 2 4-1 10-9 7-9-7L2 7z" fill="#f0492c" /><path d="M7 6l5 1 5-1 2 4-3 5-4 3-4-3-3-5z" fill="#fff" /><path d="M12 9l2 1 3-2M13 14l2-2M12 12v4" fill="none" stroke="#f0492c" strokeWidth="1.500" /></>,
  },
  {
    name: "Edge",
    art: <><circle cx="12" cy="12" r="11.500" fill="#1679c9" /><path d="M1 10C2 3 8 .5 12 .5c7 0 11.500 5 11.500 9.500 0 4-3 6-7 6-2 0-3-1-2-2 2-3 0-7-5-7-4 0-7 2-8.500 3z" fill="#45cf8c" /><path d="M1 10C2 3 8 .5 12 .5c3 0 5 1 7 2.500-8-2-15 1-18 7z" fill="#2fa8dd" /><path d="M.6 11C4 6 10 7 11 9c-5 1-5 9 1 12-5 2-11-2-11.400-10z" fill="#1463b5" /><path d="M11 9c-4 4 0 11 7 11 2 0 3 0 4-1-2 3-6 5-10 4.500C6 20 6 12 11 9z" fill="#0c4a94" /></>,
  },
  {
    name: "Firefox",
    art: <><circle cx="12" cy="13" r="10.500" fill="#ff8a1d" /><path d="M3 7l1-5 4 4 4-5c1 3 10 4 11 11 0 3-1 6-3 8 1-8-3-12-9-12z" fill="#ffcf33" /><path d="M2 9c3-2 5 0 6 1 8-1 10 3 9 7-1 4-6 6-10 4-4-2-6-7-5-12z" fill="#f5442e" /><circle cx="12.500" cy="14" r="5" fill="#7c3fc4" /><path d="M6 12c3-2 5 0 7 1-1 2-4 2-4 4-2-1-3-3-3-5z" fill="#ff9a26" /></>,
  },
  {
    name: "Skype",
    art: <><circle cx="8" cy="8" r="7" fill="#18a7e8" /><circle cx="16" cy="16" r="7" fill="#0c86d0" /><circle cx="12" cy="12" r="10" fill="#109be0" /><path d="M16 8c-1-3-8-2.500-8 .5 0 4 8 2.500 8 6 0 3.500-7.500 3.500-8.500 0" stroke="#fff" strokeWidth="2.400" fill="none" /></>,
  },
  { name: "Telegram", art: <><circle cx="12" cy="12" r="11" fill="#2f9fdb" /><path d="M4 12l15-7-3 14-5-4-2 3-1-5z" fill="#fff" /><path d="M8 13l9-6-6 7" fill="#b6d8ee" /></> },
  { name: "Zoom", open: true, art: <><rect x="0" y="1" width="24" height="22" rx="6" fill="#4488f0" /><rect x="4" y="8" width="10" height="8" rx="2" fill="#fff" /><path d="M15 11l5-3v8l-5-3z" fill="#fff" /></> },
  { name: "Acrobat Reader", open: true, art: <><rect x="1" y="1" width="22" height="22" rx="4" fill="#b20b07" /><path d="M5 18c4-3 7-8 6-13 1 6 4 9 8 9-5-1-10 1-14 4z" fill="none" stroke="#fff" strokeWidth="1.800" /></> },
  {
    name: "Word", open: true, on: true,
    art: <><path d="M8 1h15l-1 22H7z" fill="#f2f6fd" stroke="#90aee0" /><path d="M15 6h6M15 9h6M14 12h7M9 16h12M9 19h12" stroke="#4f7ac8" strokeWidth="1.500" /><path d="M1 4l13-2-1 15-12 1z" fill="#2d5cb4" /><path d="M3 7l2 7 2-6 2 6 2-8" fill="none" stroke="#fff" strokeWidth="1.600" /></>,
  },
];

const trayApps: { name: string; art: React.ReactNode }[] = [
  { name: "Protection", art: <><path d="M9 1h6a3 3 0 0 1 3 3v5a8 8 0 1 1-9-8z" fill="#55a81c" /><path d="M5 9l3 3 5-5" stroke="#fff" strokeWidth="2" /></> },
  { name: "Packages", art: <><path d="M9 1l7 4v8l-7 4-7-4V5z" fill="#e0a35a" /><path d="M9 1l5 4v8l-5 4-5-4V5z" fill="#44c4d2" /></> },
  { name: "Meetings", art: <><rect x="1" y="1" width="16" height="16" rx="5" fill="#4182e4" /><path d="M4 6h6v6H4zM11 8l3-2v6l-3-2z" fill="#fff" /></> },
  { name: "Shortcuts", art: <><path d="M5 2h8l4 7-4 7H5L1 9z" fill="#e9a918" /><path d="M5 7l4-2 4 2M9 5l-3 8M9 7l4 5" stroke="#4c3812" strokeWidth="1.500" /></> },
  { name: "Tools", art: <><path d="M3 14l5-4 4-6 4-1" stroke="#c9b6b6" strokeWidth="2.500" /><circle cx="9" cy="9" r="4" fill="#c8403c" /><circle cx="3" cy="14" r="2.500" fill="#d8d2d2" /><circle cx="14" cy="13" r="3" fill="#e8b9b5" /></> },
  { name: "Network", art: <path d="M5 3h13v9H8M1 1h4v5H1zM3 6v10M12 12v4M8 16h8" stroke="#e3e6e7" strokeWidth="1.400" /> },
];

export default function App() {
  return (
    <Desktop>
      <GlobalStyle />
      <Windows>
        <ReaderWindow />
        <WordWindow />
      </Windows>
      <Taskbar>
        <TaskItems>
          {taskApps.map((a) => (
            <Task key={a.name} $open={a.open} $on={a.on} aria-label={a.name}>
              <svg width="24" height="24" viewBox="0 0 24 24">{a.art}</svg>
            </Task>
          ))}
        </TaskItems>
        <Tray>
          {trayApps.map((a) => (
            <TrayButton key={a.name} aria-label={a.name}>
              <svg width="16" height="16" viewBox="0 0 18 18" fill="none">{a.art}</svg>
            </TrayButton>
          ))}
        </Tray>
      </Taskbar>
    </Desktop>
  );
}
